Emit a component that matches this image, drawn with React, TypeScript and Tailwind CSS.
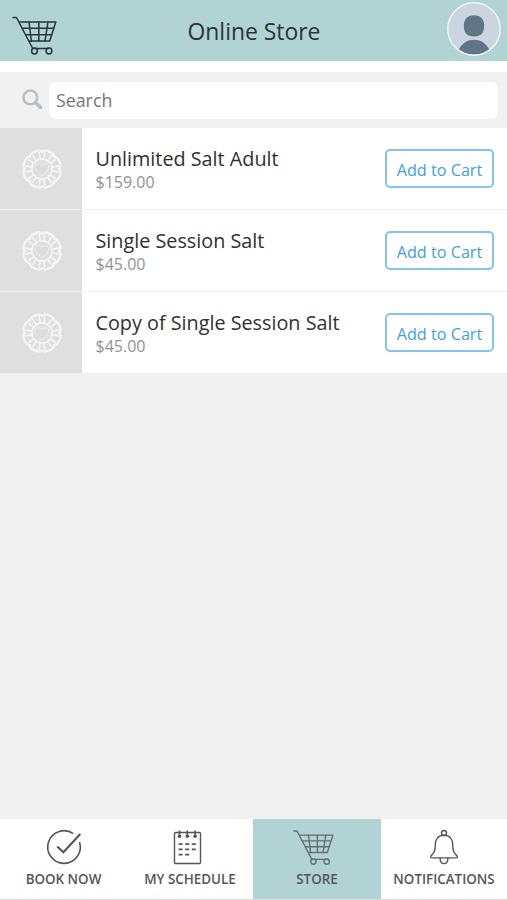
import type { ReactNode } from "react";

const products = [
	{ name: "Unlimited Salt Adult", price: "$159.00" },
	{ name: "Single Session Salt", price: "$45.00" },
	{ name: "Copy of Single Session Salt", price: "$45.00" },
];

const petals = [22.5, 67.5, 112.5, 157.5, 202.5, 247.5, 292.5, 337.5];

function CartIcon({ className }: { className: string }) {
	return (
		<svg
			className={className}
			viewBox="0 0 46 40"
			fill="none"
			stroke="currentColor"
			strokeWidth="1.5"
			strokeLinecap="round"
			strokeLinejoin="round"
		>
			<path d="M2 2.5h3.5L21.7 33.5h15.5" />
			<path d="M8.5 7h36.3L38.7 26h-20" />
			<path d="M11.5 13.3h31.2M15 19.7h25.7" />
			<path d="M18 7l2.4 19M27.8 7v19M37 7l-3 19" />
			<circle cx="23.5" cy="36" r="2.9" />
			<circle cx="38" cy="36" r="2.9" />
		</svg>
	);
}

function CheckIcon() {
	return (
		<svg
			className="h-[38px] w-[38px]"
			viewBox="0 0 38 38"
			fill="none"
			stroke="currentColor"
		>
			<path d="M28.2 5.6A16.3 16.3 0 1 0 34.5 14" strokeWidth="1.6" />
			<path d="M12.2 18.6l6.2 5.7L35.3 6" strokeWidth="2.1" />
		</svg>
	);
}

function ScheduleIcon() {
	return (
		<svg
			className="mr-[6px] h-[38px] w-[38px]"
			viewBox="0 0 38 38"
			fill="none"
			stroke="currentColor"
			strokeWidth="1.4"
		>
			<rect x="6.5" y="4.5" width="26" height="31" rx="1" />
			<path d="M11.5 2.5v6M19.3 2.5v6M27.1 2.5v6" strokeWidth="1.6" />
			<g fill="currentColor" stroke="none">
				<circle cx="11.5" cy="8.3" r="1.8" />
				<circle cx="19.3" cy="8.3" r="1.8" />
				<circle cx="27.1" cy="8.3" r="1.8" />
			</g>
			<path
				d="M10.6 16.2h4M17.2 16.2h4M23.8 16.2h4M10.6 21.4h4M17.2 21.4h4M23.8 21.4h4M10.6 26.6h4M17.2 26.6h4"
				strokeWidth="1.7"
			/>
		</svg>
	);
}

function BellIcon() {
	return (
		<svg
			className="h-[38px] w-[38px]"
			viewBox="0 0 38 38"
			fill="none"
			stroke="currentColor"
			strokeWidth="1.4"
			strokeLinejoin="round"
		>
			<circle cx="19" cy="5" r="2.5" />
			<path d="M19 7.2c-5.7 0-8.7 3.9-8.7 9.4 0 6.4-1.2 8.4-4.2 11.1-1 1-.4 2.2.8 2.2h24.2c1.2 0 1.8-1.2.8-2.2-3-2.7-4.2-4.7-4.2-11.1 0-5.5-3-9.4-8.7-9.4z" />
			<path d="M15.1 29.9c0 3.8 1.7 5.7 3.9 5.7s3.9-1.9 3.9-5.7" />
		</svg>
	);
}

function SaltLogo() {
	return (
		<svg
			className="ml-px h-[42px] w-[42px]"
			viewBox="-21 -21 42 42"
			fill="none"
			stroke="#f4f4f4"
			strokeLinecap="round"
			strokeLinejoin="round"
		>
			{petals.map((angle) => (
				<g key={angle} transform={`rotate(${angle})`}>
					<path
						d="M-6.6 -15.9C-5.4 -18.9 -2.4 -18.9 0 -18.9C2.4 -18.9 5.4 -18.9 6.6 -15.9"
						strokeWidth="2.4"
					/>
					<path
						d="M-2.2 -10.4L-3.6 -16M2.2 -10.4L3.6 -16"
						strokeWidth="1.7"
					/>
					<path d="M-3.7 -9.2Q0 -11.2 3.7 -9.2" strokeWidth="1.7" />
				</g>
			))}
			<path
				d="M0 6.8L-6 0.6C-8.8-3-4.4-7.6 0-3.8 4.4-7.6 8.8-3 6 0.6z"
				fill="#dcdcdc"
				strokeWidth="0.8"
			/>
		</svg>
	);
}

function Avatar() {
	return (
		<svg className="h-[54px] w-[54px]" viewBox="0 0 54 54">
			<defs>
				<clipPath id="avatar">
					<circle cx="27" cy="27" r="25.6" />
				</clipPath>
			</defs>
			<circle cx="27" cy="27" r="26.3" fill="#cbd5df" />
			<g fill="#607585" clipPath="url(#avatar)">
				<path d="M27 13.2c-6.3 0-10.2 3.8-10.2 10.4 0 7.2 3 11 10.2 11s10.2-3.8 10.2-11c0-6.6-3.9-10.4-10.2-10.4z" />
				<path d="M10.5 54V50C14 42.2 19.2 37.8 27 37.8S40 42.2 43.5 50v4z" />
			</g>
			<circle
				cx="27"
				cy="27"
				r="26.2"
				fill="none"
				stroke="#f0f6f8"
				strokeWidth="1.5"
			/>
		</svg>
	);
}

function NavItem({
	icon,
	label,
	className,
}: {
	icon: ReactNode;
	label: string;
	className: string;
}) {
	return (
		<button
			className={`flex flex-col items-center whitespace-nowrap pt-[9px] text-[13.4px] leading-[18px] font-semibold text-[#535658] ${className}`}
		>
			{icon}
			<span className="mt-[4px]">{label}</span>
		</button>
	);
}

export default function App() {
	return (
		<div className="flex h-[900px] w-[507px] flex-col overflow-hidden bg-[#f1f1f1] font-['Open_Sans',sans-serif]">
			<header className="grid h-[61px] shrink-0 grid-cols-[1fr_auto_1fr] bg-[#b1d3d3] text-[#26363a]">
				<CartIcon className="mt-[15px] ml-[11px] h-[40px] w-[46px]" />
				<h1 className="pt-[15px] pl-px text-[22.9px] leading-[34px]">
					Online Store
				</h1>
				<div className="mt-[2px] mr-[6px] justify-self-end">
					<Avatar />
				</div>
			</header>
			<div className="h-[11px] shrink-0 bg-white" />

			<div className="flex h-14 shrink-0 items-center pr-[9px] pl-[22px]">
				<svg
					className="h-[22px] w-[22px]"
					viewBox="0 0 22 22"
					fill="none"
					stroke="#b9bfc2"
				>
					<circle cx="8.3" cy="8.4" r="6.9" strokeWidth="2.5" />
					<path d="M13.5 13.6L18.6 18.4" strokeWidth="3.6" strokeLinecap="round" />
				</svg>
				<input
					className="ml-[5px] h-[37px] flex-1 rounded-[7px] bg-white px-[7px] text-[17.8px] text-[#757575] outline-none placeholder:text-[#757575]"
					placeholder="Search"
				/>
			</div>

			<ul className="bg-white">
				{products.map((product) => (
					<li
						key={product.name}
						className="flex h-[82px] items-stretch border-b border-[#eeeeee] last:h-[81px] last:border-b-0"
					>
						<div className="flex w-[82px] items-center justify-center bg-[#dfdfdf]">
							<SaltLogo />
						</div>
						<div className="flex-1 pt-[17px] pl-[13.5px]">
							<h2 className="text-[19.8px] leading-[27px] text-[#303030]">
								{product.name}
							</h2>
							<p className="-mt-px text-[16px] leading-[22px] text-[#929292]">
								{product.price}
							</p>
						</div>
						<button className="mt-[21px] mr-[13px] h-[39px] w-[109px] rounded-[5px] border-2 border-[#82c3f1] pt-[3px] text-[16.2px] text-[#439fe3]">
							Add to Cart
						</button>
					</li>
				))}
			</ul>

			<nav className="mt-auto grid h-[81px] shrink-0 grid-cols-[127px_126px_128px_126px] border-b border-[#dddddd] bg-white">
				<NavItem icon={<CheckIcon />} label="BOOK NOW" className="" />
				<NavItem icon={<ScheduleIcon />} label="MY SCHEDULE" className="" />
				<NavItem
					icon={<CartIcon className="mr-[9px] h-[38px] w-[42px] opacity-80" />}
					label="STORE"
					className="bg-[#b1d3d3]"
				/>
				<NavItem icon={<BellIcon />} label="NOTIFICATIONS" className="" />
			</nav>
		</div>
	);
}
